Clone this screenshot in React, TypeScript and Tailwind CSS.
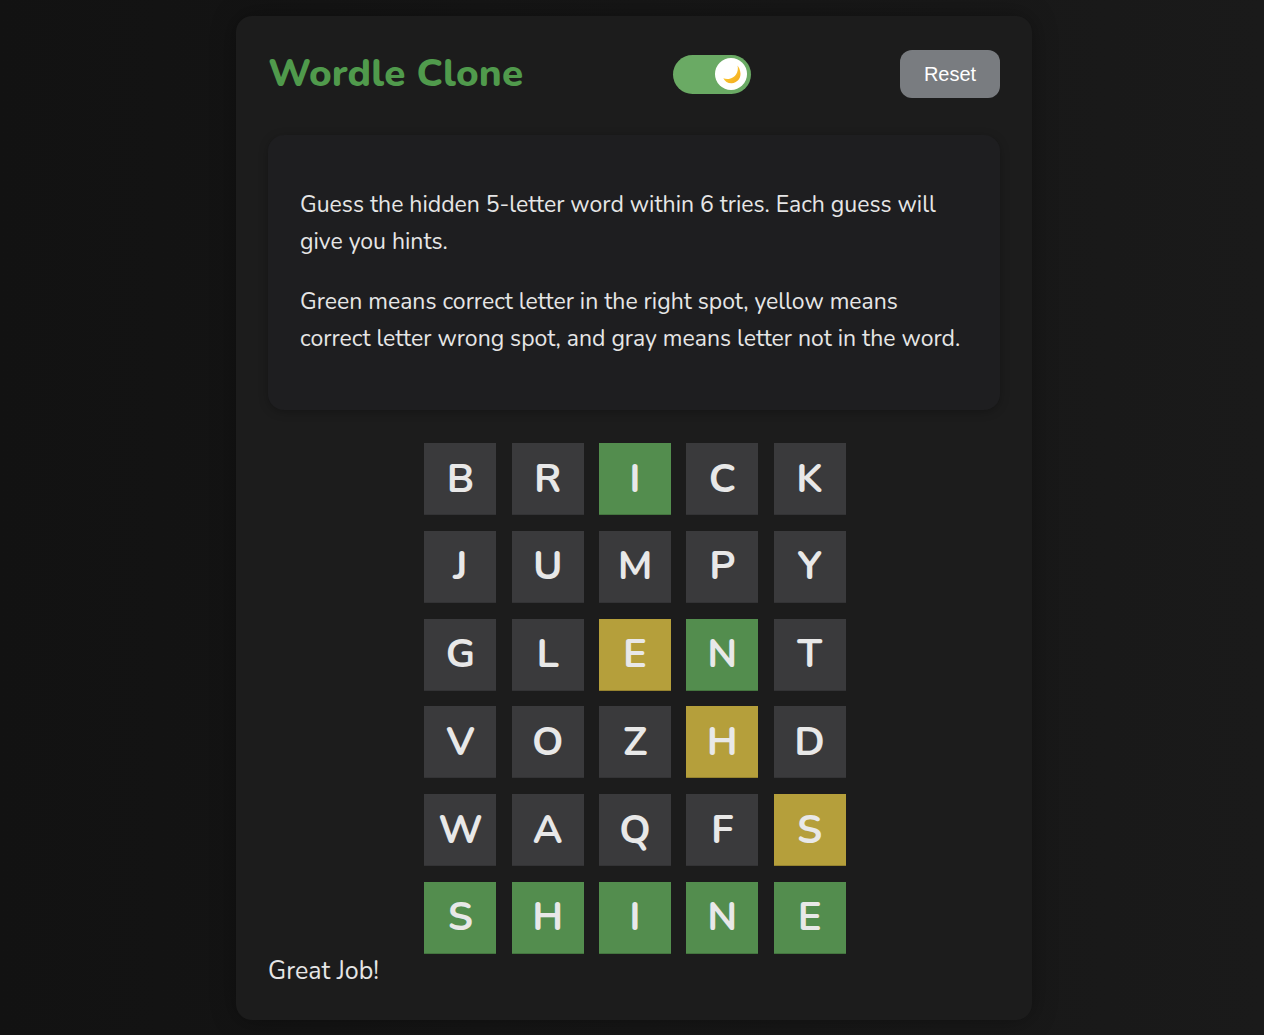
const FONT = { fontFamily: '"Nunito", Lato, "Noto Sans", sans-serif' };

type Tone = "gray" | "green" | "yellow";

const rows: [string, Tone][][] = [
  [["B", "gray"], ["R", "gray"], ["I", "green"], ["C", "gray"], ["K", "gray"]],
  [["J", "gray"], ["U", "gray"], ["M", "gray"], ["P", "gray"], ["Y", "gray"]],
  [["G", "gray"], ["L", "gray"], ["E", "yellow"], ["N", "green"], ["T", "gray"]],
  [["V", "gray"], ["O", "gray"], ["Z", "gray"], ["H", "yellow"], ["D", "gray"]],
  [["W", "gray"], ["A", "gray"], ["Q", "gray"], ["F", "gray"], ["S", "yellow"]],
  [["S", "green"], ["H", "green"], ["I", "green"], ["N", "green"], ["E", "green"]],
];

const toneClass: Record<Tone, string> = {
  gray: "bg-[#3a3a3c] border-b-[#333335]",
  green: "bg-[#538d4e] border-b-[#44753f]",
  yellow: "bg-[#b59f3b] border-b-[#96832f]",
};

export default function App() {
  return (
    <div
      className="min-h-screen w-full bg-gradient-to-r from-[#121212] to-[#1a1a1a] pt-4 pb-4 pl-1"
      style={FONT}
    >
      <div className="mx-auto w-[796px] rounded-2xl bg-[#1c1c1c] px-8 pt-[34px] pb-[33px] shadow-[0_0_24px_rgba(0,0,0,0.35)]">
        <header className="flex h-12 items-center justify-between">
          <h1 className="text-[38.6px] font-extrabold leading-none tracking-[0.2px] text-[#509a4c]">
            Wordle Clone
          </h1>
          <Toggle />
          <button
            className="h-12 w-[100px] rounded-xl bg-[#797c80] text-[20px] text-white"
            style={{ fontFamily: '"Liberation Sans", Arial, sans-serif' }}
          >
            Reset
          </button>
        </header>

        <section className="mt-[37px] flex flex-col gap-[23px] rounded-2xl bg-[#1e1e20] px-8 pt-[51px] pb-[53px] text-[23px] leading-[37px] text-[#e6e6e6] shadow-[0_2px_10px_rgba(0,0,0,0.25)]">
          <p>
            Guess the hidden 5-letter word within 6 tries. Each guess will give
            you hints.
          </p>
          <p>
            Green means correct letter in the right spot, yellow means correct
            letter wrong spot, and gray means letter not in the word.
          </p>
        </section>

        <div className="mt-[33px] flex flex-col items-center gap-[15.8px] pl-[2px]">
          {rows.map((row, i) => (
            <div key={i} className="flex gap-[15.3px]">
              {row.map(([ch, tone], j) => (
                <div
                  key={j}
                  className={
                    "flex h-[72px] w-[72px] items-center justify-center border-b text-[40px] font-bold text-[#e8e8e8] " +
                    toneClass[tone]
                  }
                >
                  {ch}
                </div>
              ))}
            </div>
          ))}
        </div>

        <p className="mt-[1px] text-[25px] leading-[32px] text-[#e6e6e6]">Great Job!</p>
      </div>
    </div>
  );
}

function Toggle() {
  return (
    <div className="flex h-[39px] w-[78px] items-center justify-end rounded-full bg-[#6aaa64] pr-[4px]">
      <div className="flex h-[32px] w-[32px] items-center justify-center rounded-full bg-white">
        <svg width="24" height="24" viewBox="0 0 24 24" aria-hidden>
          <defs>
            <linearGradient id="moon" x1="0" y1="0" x2="1" y2="1">
              <stop offset="0" stopColor="#ffd43b" />
              <stop offset="1" stopColor="#f2a91c" />
            </linearGradient>
          </defs>
          <path
            d="M18.5 3.5c1.6 6.2-2.2 12.6-8.6 13.4-2 .3-3.9 0-5.6-.7 1.5 3.2 4.8 5.3 8.5 5.1 5.1-.3 9-4.6 8.7-9.7-.2-3.5-1.6-6.4-3-8.1z"
            fill="url(#moon)"
          />
        </svg>
      </div>
    </div>
  );
}
